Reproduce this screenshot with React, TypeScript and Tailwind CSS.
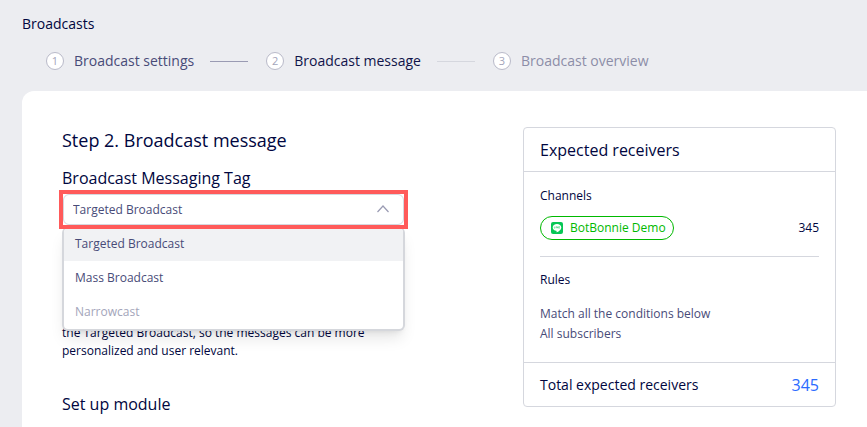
import { useState } from "react";
import clsx from "clsx";

const steps = [
  { label: "Broadcast settings", text: "text-[#484b78]", line: "bg-[#9a9bb3]" },
  { label: "Broadcast message", text: "text-[#10144a]", line: "bg-[#d5d7de]" },
  { label: "Broadcast overview", text: "text-[#8c8da8]", line: "" },
];

const tags = [
  { label: "Targeted Broadcast", disabled: false },
  { label: "Mass Broadcast", disabled: false },
  { label: "Narrowcast", disabled: true },
];

function LineIcon() {
  return (
    <svg viewBox="0 0 12 12" className="size-3" aria-hidden="true">
      <rect width="12" height="12" rx="2" fill="#06c755" />
      <path
        d="M6 2C3.600 2 1.700 3.500 1.700 5.400c0 1.700 1.500 3.100 3.600 3.400.3.1.4.3.3.6l-.1.7c0 .2.1.3.4.2 1.300-.7 4.400-2.600 4.400-4.900C10.300 3.500 8.400 2 6 2Z"
        fill="#fff"
      />
      <path
        d="M3.300 4.500v1.700h.8M4.900 4.500v1.700M5.700 6.200V4.500l1.100 1.700V4.500M8.700 4.500h-.9v1.700h.9M7.800 5.300h.8"
        stroke="#06c755"
        strokeWidth=".45"
        fill="none"
      />
    </svg>
  );
}

function Steps() {
  return (
    <ol className="mt-[17px] flex items-center pl-6">
      {steps.map((step, i) => (
        <li key={step.label} className="flex items-center">
          <span className="flex size-[18px] items-center justify-center rounded-full border border-[#b9bac9] bg-white text-[11px] leading-4 text-[#a3a5ba]">
            {i + 1}
          </span>
          <span className={clsx("ml-[10px] text-sm", step.text)}>
            {step.label}
          </span>
          {step.line && (
            <span className={clsx("mr-[18px] ml-4 h-px w-[38px]", step.line)} />
          )}
        </li>
      ))}
    </ol>
  );
}

function TagSelect() {
  const [tag, setTag] = useState("Targeted Broadcast");

  return (
    <div className="relative mt-1">
      <div className="relative z-20 mx-px bg-white ring-4 ring-[#ff5a5a]">
        <select
          id="tag"
          value={tag}
          onChange={(e) => setTag(e.target.value)}
          className="block h-[31px] w-full appearance-none rounded-md border border-[#d5d7de] bg-white px-[9px] text-xs text-[#484b78] outline-none"
        >
          {tags.map((t) => (
            <option key={t.label} disabled={t.disabled}>
              {t.label}
            </option>
          ))}
        </select>
        <svg
          viewBox="0 0 12 8"
          className="pointer-events-none absolute top-[11px] right-[15px] h-2 w-3"
          aria-hidden="true"
        >
          <path d="M.5 7 6 1l5.500 6" fill="none" stroke="#9a9bb3" strokeWidth="1.200" />
        </svg>
      </div>
      <ul
        role="listbox"
        aria-label="Broadcast Messaging Tag"
        className="absolute inset-x-0 top-[33px] z-10 overflow-hidden rounded-md border-x-2 border-b-2 border-[#d5d7dc] bg-white shadow-lg"
      >
        {tags.map((t) => (
          <li key={t.label} role="option" aria-selected={t.label === tag}>
            <button
              type="button"
              disabled={t.disabled}
              onClick={() => setTag(t.label)}
              className={clsx(
                "block h-[34px] w-full px-[11px] text-left text-xs",
                t.disabled ? "text-[#a3a5ba]" : "text-[#484b78]",
                t.label === tag && "bg-[#f1f2f4]",
              )}
            >
              {t.label}
            </button>
          </li>
        ))}
      </ul>
    </div>
  );
}

function Receivers() {
  return (
    <aside className="w-[313px] shrink-0 self-start rounded border border-[#d5d7de]">
      <h2 className="border-b border-[#d5d7de] px-4 pt-[10px] pb-[9px] text-base leading-6">
        Expected receivers
      </h2>
      <div className="px-4 pt-[14px] pb-[18px] text-xs leading-5">
        <h3>Channels</h3>
        <div className="mt-[10px] flex items-center justify-between border-b border-[#d5d7de] pb-4">
          <span className="flex h-6 items-center gap-[7px] rounded-full border border-[#00b900] pr-[7px] pl-[10px] text-[#00b900]">
            <LineIcon />
            BotBonnie Demo
          </span>
          <span>345</span>
        </div>
        <h3 className="mt-[13px]">Rules</h3>
        <p className="mt-[14px] text-[#484b78]">Match all the conditions below</p>
        <p className="text-[#484b78]">All subscribers</p>
      </div>
      <div className="flex items-center justify-between border-t border-[#d5d7de] px-4 pt-[10px] pb-[9px]">
        <span className="text-sm leading-6">Total expected receivers</span>
        <span className="text-base leading-6 text-[#2b6bff]">345</span>
      </div>
    </aside>
  );
}

export default function App() {
  return (
    <div className="flex min-h-screen flex-col bg-[#ecedf1] pl-[22px] font-['Open_Sans','Noto_Sans',sans-serif] text-[#000640]">
      <header className="pt-[14px] pb-5">
        <h1 className="text-sm">Broadcasts</h1>
        <Steps />
      </header>
      <main className="flex flex-1 justify-between rounded-tl-xl bg-white pt-9 pr-[31px] pl-10">
        <section className="w-[343px]">
          <h2 className="text-lg leading-[26px]">Step 2. Broadcast message</h2>
          <label htmlFor="tag" className="mt-[13px] block text-base leading-6">
            Broadcast Messaging Tag
          </label>
          <TagSelect />
          <p className="mt-[99px] text-xs leading-[18px]">
            the Targeted Broadcast, so the messages can be more personalized and
            user relevant.
          </p>
          <h3 className="mt-8 text-base leading-6">Set up module</h3>
        </section>
        <Receivers />
      </main>
    </div>
  );
}
